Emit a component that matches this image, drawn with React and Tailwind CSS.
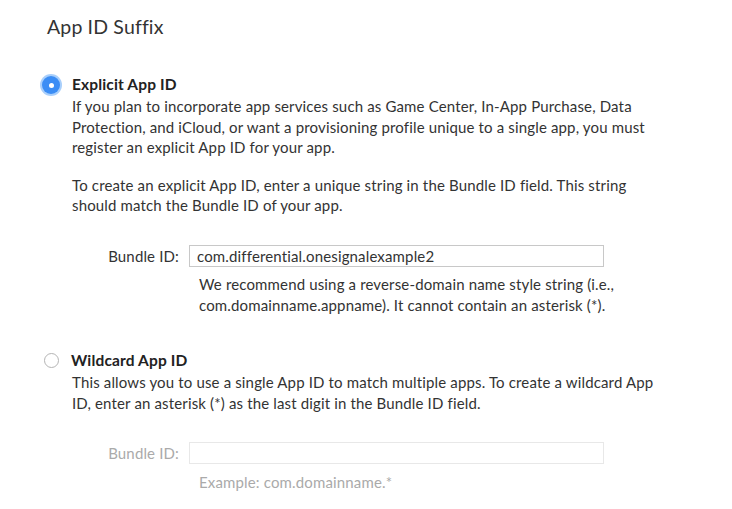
export default function App() {
  const font = { fontFamily: "Lato, 'Open Sans', sans-serif" };
  return (
    <div className="w-[732px] h-[509px] bg-white text-[#333] overflow-hidden tracking-[0.15px]" style={font}>
      <div className="pl-[47px] pt-[14px]">
        <h1 className="text-[19.5px] leading-[26px] font-normal">App ID Suffix</h1>
      </div>
      <div className="pl-[42px] pt-[34px]">
        <div className="flex items-start gap-[12px]">
          <div className="w-[18px] h-[18px] mt-[2px] rounded-full bg-[#3b8df5] shadow-[0_0_0_2px_#a9cffb] flex items-center justify-center">
            <div className="w-[5px] h-[5px] rounded-full bg-white" />
          </div>
          <div className="flex flex-col">
            <div className="text-[15.5px] leading-[20px] font-bold text-[#222]">Explicit App ID</div>
            <p className="text-[15px] leading-[20.5px] mt-[2px] whitespace-nowrap">
              If you plan to incorporate app services such as Game Center, In-App Purchase, Data<br />
              Protection, and iCloud, or want a provisioning profile unique to a single app, you must<br />
              register an explicit App ID for your app.
            </p>
            <p className="text-[15px] leading-[20.5px] mt-[17px] whitespace-nowrap">
              To create an explicit App ID, enter a unique string in the Bundle ID field. This string<br />
              should match the Bundle ID of your app.
            </p>
          </div>
        </div>
        <div className="flex items-center mt-[29px]">
          <div className="w-[147px] text-right text-[15px] pr-[10px]">Bundle ID:</div>
          <div className="w-[415px] h-[22px] border border-[#c8c8c8] px-[7px] text-[15px] leading-[20px] whitespace-nowrap">com.differential.onesignalexample2</div>
        </div>
        <p className="ml-[157px] mt-[7px] text-[15px] leading-[20.5px] whitespace-nowrap">
          We recommend using a reverse-domain name style string (i.e.,<br />
          com.domainname.appname). It cannot contain an asterisk (*).
        </p>
        <div className="flex items-start gap-[13px] mt-[35px]">
          <div className="w-[15px] h-[15px] mt-[3px] ml-[2px] rounded-full border border-[#b4b4b4] bg-white" />
          <div className="flex flex-col">
            <div className="text-[15.5px] leading-[20px] font-bold text-[#222] -ml-[1px]">Wildcard App ID</div>
            <p className="text-[15px] leading-[20.5px] mt-[2px] whitespace-nowrap">
              This allows you to use a single App ID to match multiple apps. To create a wildcard App<br />
              ID, enter an asterisk (*) as the last digit in the Bundle ID field.
            </p>
          </div>
        </div>
        <div className="flex items-center mt-[29px] text-[#aaa]">
          <div className="w-[147px] text-right text-[15px] pr-[10px]">Bundle ID:</div>
          <div className="w-[415px] h-[22px] border border-[#e8e8e8]" />
        </div>
        <p className="ml-[157px] mt-[7px] text-[15px] leading-[20.5px] text-[#aaa]">Example: com.domainname.*</p>
      </div>
    </div>
  );
}
